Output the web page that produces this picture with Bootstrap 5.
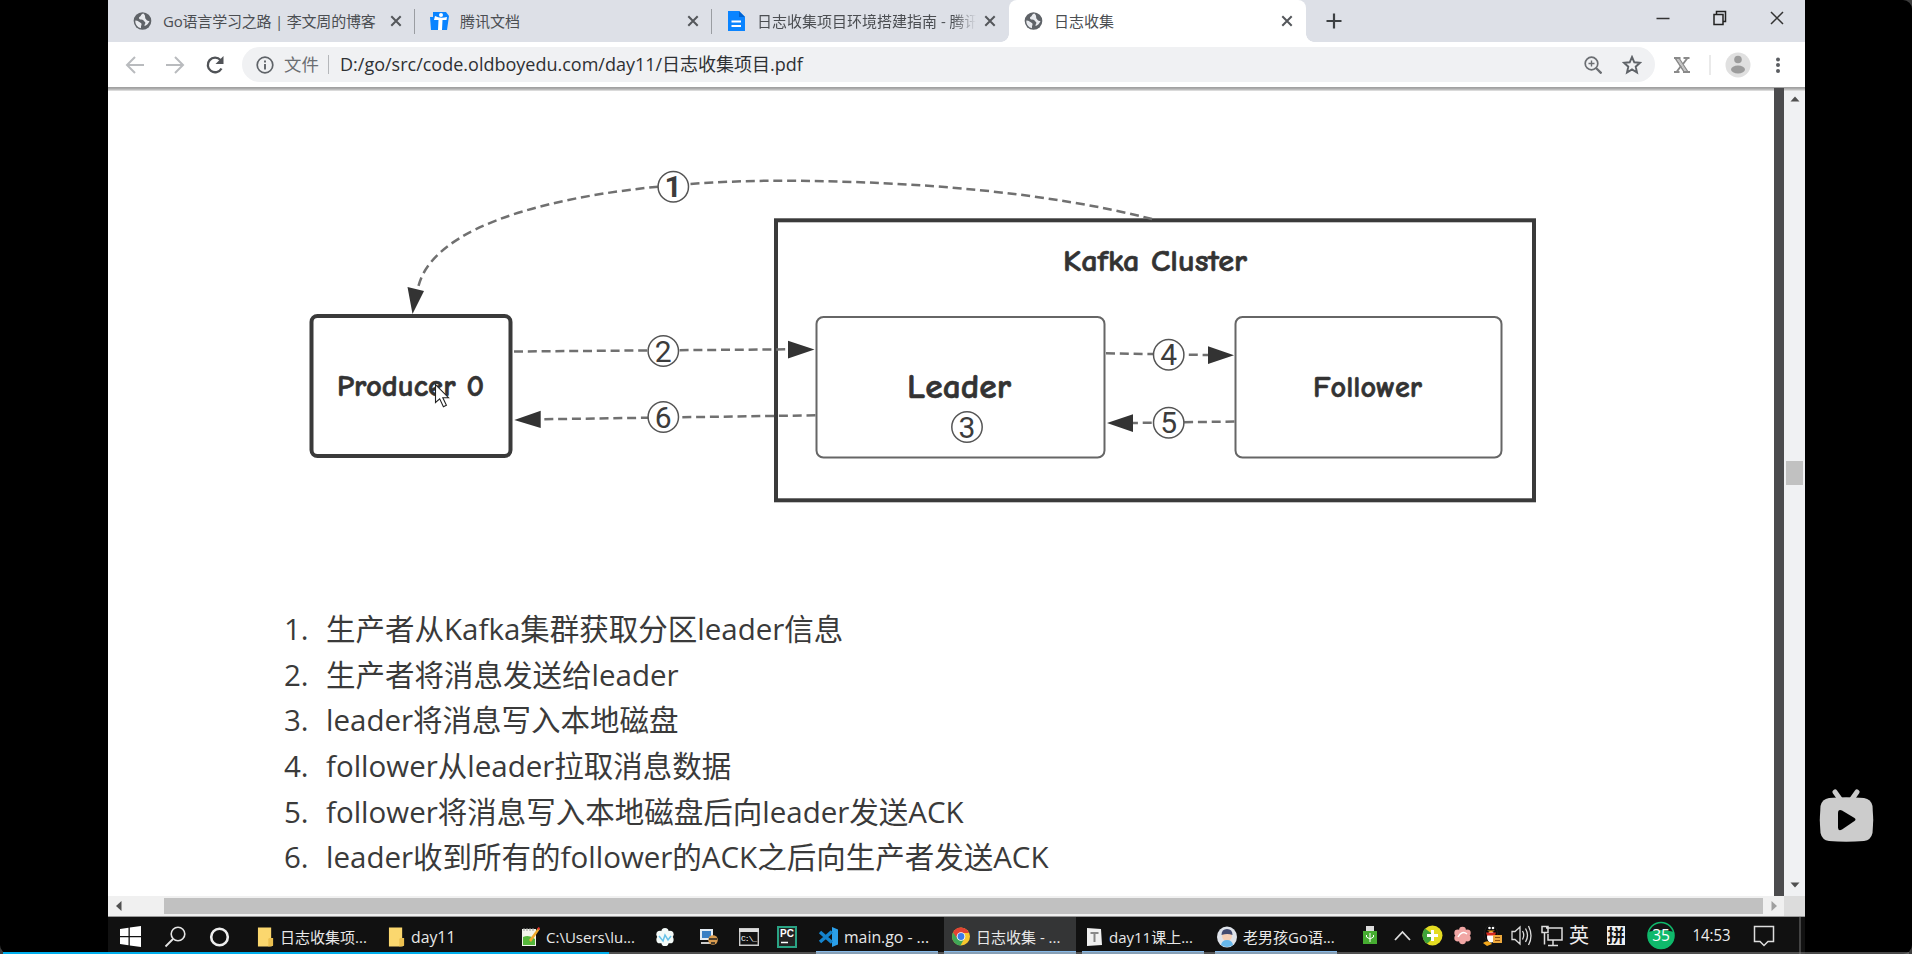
<!DOCTYPE html>
<html lang="zh-CN">
<head>
<meta charset="utf-8">
<title>日志收集</title>
<link href="https://cdn.jsdelivr.net/npm/bootstrap@5.3.0/dist/css/bootstrap.min.css" rel="stylesheet">
<script src="https://cdn.jsdelivr.net/npm/bootstrap@5.3.0/dist/js/bootstrap.bundle.min.js"></script>
<style>
html,body{height:100%;overflow:hidden;background:#3c3c3c}
body{font-family:"Open Sans","Noto Sans CJK SC",sans-serif;color:#333}
svg{display:block;flex:none}
.stage{width:1912px;height:954px;background:#000;border-radius:0 9px 9px 9px}
.side-l{width:108px;flex:none}
.side-r{width:107px;flex:none;padding:789px 0 0 13.5px}
.win{width:1697px;height:954px;flex:none;background:#fff}
.strip{height:42px;background:#dde0e7;flex:none}
.tab{width:297px;height:42px;padding:0 12px 8px 15px;position:relative;font-size:15px;color:#4b4e52;flex:none;line-height:26px}
.tab.first{width:307px;padding-left:25px}
.tab.first .ttl{letter-spacing:-.2px}
.tab svg.fav{margin-right:11px}
.tab .ttl{flex:1 1 0;white-space:nowrap;height:26px;margin-top:8px}
.tab .fade-end{-webkit-mask-image:linear-gradient(90deg,#000 87%,transparent 97%)}
.tab svg{margin-top:7px}
.tab.sep::after{content:"";position:absolute;right:0;top:9px;width:1px;height:25px;background:#9a9da2}
.tab.cur{background:#fff;border-radius:8px 8px 0 0}
.tab.cur::before,.tab.cur::after{content:"";position:absolute;bottom:0;width:8px;height:8px}
.tab.cur::before{left:-8px;background:radial-gradient(circle at 0 0,#dde0e7 7.5px,#fff 8px)}
.tab.cur::after{right:-8px;background:radial-gradient(circle at 100% 0,#dde0e7 7.5px,#fff 8px)}
.plus{margin:11px 0 0 19px}
.ctl{width:57px;height:35px}
.tools{height:45px;flex:none;padding-left:17px}
.nav-ic{width:40px}
.omni{width:1413px;height:35px;border-radius:18px;background:#f0f1f3;margin-left:-3px;padding:0 13px 0 13.5px}
.omni .kind{font-size:17.4px;color:#6b6e72;margin-left:10.5px;width:35px;white-space:nowrap}
.omni .bar{width:1px;height:19px;background:#b5b7ba;margin:0 11px 0 9px}
.omni .url{font-size:18px;color:#2e3033;white-space:nowrap;flex:1 1 0}
.star{margin-left:20px}
.ext{margin-left:18px}
.rule{height:4px;flex:none;background:linear-gradient(#9c9c9c,#b0b0b0 50%,#e8e8e8)}
.view{height:805px;flex:none}
.page{width:1666px;flex:none}
.gutter{width:10px;background:#4b4b4d;flex:none;margin-top:-3px;height:808px}
.vbar{width:21px;background:#f0f1f3;padding:5px 0 8px;flex:none}
.vthumb{width:17px;height:24px;background:#c1c1c1;margin-top:359px}
.steps{list-style:none;margin:-1px 0 0;padding:0 0 0 176px;font-size:29.5px;line-height:45.65px;color:#3a3a3a;white-space:nowrap}
.steps li{display:flex}
.steps .num{width:42px;flex:none}
.hbar{height:21px;flex:none;background:#f0f0f0;border-bottom:1px solid #999}
.hthumb{height:16px;width:1599px;background:#c1c1c1;margin-left:42px}
.corner{width:21px;height:20px;background:#dcdcdc}
.task{height:37px;flex:none;background:#111;color:#e8e8e8;font-size:15px}
.task .it{height:37px;padding-top:2px;flex:none;display:flex;align-items:center;white-space:nowrap;line-height:20px}
.task .it svg{margin-right:6px}
.task .lat{font-size:15.8px}
.task .on{background:#343536}
.run{box-shadow:inset 0 -3px #86b9e8}
.w-start{width:140px;padding-left:12px;gap:20px}
.w-a{width:131px;padding-left:9px}.w-b{width:133px;padding-left:9px}
.w-c{width:131px;padding-left:9px}
.w-p{width:173px;padding-left:12px;gap:17px}
.w-v{width:122px;padding-left:2px;margin-right:6px}.w-g{width:132px;padding-left:7px;margin-right:6px}
.w-t{width:122px;padding-left:3px;margin-right:11px}.w-q{width:122px;padding-left:2px}
.w-start svg,.w-p svg{margin-right:0!important}
.load{position:absolute;left:3px;top:952px;width:606px;height:2px;background:#00aeec}
.rest{position:absolute;left:609px;top:952px;width:1300px;height:2px;background:#8888;}
</style>
</head>
<body>
<svg width="0" height="0" class="position-absolute">
<symbol id="globe" viewBox="0 0 20 20"><circle cx="10" cy="10" r="9.3" fill="#5f6368"/><path d="M11 2.2C8 3 8.500 5.500 6.500 6C5.500 7 7 8.500 8.500 8.500C11 8.500 11 10 12.500 11C14 12 12 13.500 12 15C13 15.500 16.500 13 17.300 10C15.500 10.500 14.500 9.500 13.500 8C12 7 14 5 11 2.200zM2.500 9.500C5 9.500 8 11.500 9 13C9 15 8 16 8.500 17.500C4.500 17 2 13 2.500 9.500z" fill="#e8eaee"/></symbol>
<symbol id="cross" viewBox="0 0 14 14"><path d="M2.300 2.300L11.700 11.700M11.700 2.300L2.300 11.700" stroke="#54575b" stroke-width="2"/></symbol>
<symbol id="folder" viewBox="0 0 18 22"><path d="M1 1h14v11h2v8l-2 1H1z" fill="#fbd76e"/><path d="M12 21V13.500q0-1.500 1.500-1.500H17v8z" fill="#ecc050"/></symbol>
<symbol id="petal" viewBox="0 0 22 22"><g><circle cx="11" cy="5" r="4"/><circle cx="5.500" cy="8" r="4"/><circle cx="16.500" cy="8" r="4"/><circle cx="5.500" cy="14" r="4"/><circle cx="16.500" cy="14" r="4"/><circle cx="11" cy="17" r="4"/><circle cx="11" cy="11" r="6"/></g></symbol>
</svg>
<div class="stage d-flex position-relative">
<div class="side-l"></div>
<main class="win d-flex flex-column">
 <div class="strip d-flex">
  <div class="tab first sep d-flex align-items-start"><svg class="fav" width="19" height="28"><use href="#globe" y="4.500" width="19" height="19"/></svg><div class="ttl">Go语言学习之路 | 李文周的博客</div><svg width="14" height="28"><use href="#cross" y="7" width="14" height="14"/></svg></div>
  <div class="tab sep d-flex align-items-start"><svg class="fav" width="19" height="28" viewBox="0 0 19 28"><path d="M3 5h13l3 4-2 14H1L0 10h3z" fill="#0a84ff"/><path d="M5 9q5 3 12 1l-.5 3h-4L12 23H8l.5-10H4z" fill="#fff"/><circle cx="11" cy="8" r="2" fill="#fff"/></svg><div class="ttl">腾讯文档</div><svg width="14" height="28"><use href="#cross" y="7" width="14" height="14"/></svg></div>
  <div class="tab d-flex align-items-start"><svg class="fav" width="19" height="28" viewBox="0 0 19 28"><path d="M1 4h11l6 6v14H1z" fill="#0a84ff"/><path d="M12 4v6h6z" fill="#0062d0"/><path d="M4.500 14.500h9.500M4.500 19h9.500" stroke="#fff" stroke-width="1.800"/></svg><div class="ttl fade-end">日志收集项目环境搭建指南 - 腾讯</div><svg width="14" height="28"><use href="#cross" y="7" width="14" height="14"/></svg></div>
  <div class="tab cur d-flex align-items-start"><svg class="fav" width="19" height="28"><use href="#globe" y="4.500" width="19" height="19"/></svg><div class="ttl">日志收集</div><svg width="14" height="28"><use href="#cross" y="7" width="14" height="14"/></svg></div>
  <svg class="plus" width="18" height="20" viewBox="0 0 18 20"><path d="M9 2.500v15M1.500 10h15" stroke="#3c4043" stroke-width="2.200"/></svg>
  <div class="ms-auto d-flex">
   <div class="ctl d-flex align-items-center justify-content-center"><svg width="16" height="16"><path d="M1.500 8.500h13" stroke="#333" stroke-width="1.500"/></svg></div>
   <div class="ctl d-flex align-items-center justify-content-center"><svg width="16" height="16"><path d="M2 4.500h9v10H2zM4.500 4V1.500h9v10H11" fill="none" stroke="#222" stroke-width="1.500"/></svg></div>
   <div class="ctl d-flex align-items-center justify-content-center"><svg width="16" height="16"><path d="M2 2l12 12M14 2L2 14" stroke="#333" stroke-width="1.500"/></svg></div>
  </div>
 </div>
 <div class="tools d-flex align-items-center">
  <div class="nav-ic"><svg width="20" height="20"><path d="M19 10H2.500M10 2L2 10l8 8" fill="none" stroke="#b9bbbe" stroke-width="2"/></svg></div>
  <div class="nav-ic"><svg width="20" height="20"><path d="M1 10h16.500M10 2l8 8-8 8" fill="none" stroke="#b9bbbe" stroke-width="2"/></svg></div>
  <div class="nav-ic"><svg width="20" height="20"><path d="M16.500 13.500A7.300 7.300 0 1 1 15.500 5" fill="none" stroke="#505357" stroke-width="2.300"/><path d="M18.500 1v8h-8z" fill="#505357"/></svg></div>
  <div class="omni d-flex align-items-center">
   <svg width="18" height="18"><circle cx="9" cy="9" r="7.800" fill="none" stroke="#5f6368" stroke-width="1.700"/><path d="M9 8v5.500M9 4.500v2" stroke="#5f6368" stroke-width="1.900"/></svg>
   <div class="kind">文件</div><div class="bar"></div>
   <div class="url">D:/go/src/code.oldboyedu.com/day11/日志收集项目.pdf</div>
   <svg width="18" height="18"><circle cx="7.500" cy="7.500" r="6.300" fill="none" stroke="#6b6e72" stroke-width="1.700"/><path d="M12 12l5.500 5.500" stroke="#6b6e72" stroke-width="2.300"/><path d="M4.500 7.500h6M7.500 4.500v6" stroke="#6b6e72" stroke-width="1.400"/></svg>
   <svg width="20" height="20" class="star"><path d="M10 2l2.300 5.300 5.700.5-4.300 3.900 1.300 5.800-5-3.100-5 3.100 1.300-5.800L2 7.800l5.700-.5z" fill="none" stroke="#5f6368" stroke-width="1.900"/></svg>
  </div>
  <svg width="18" height="18" class="ext"><path d="M2.500 2.500L11 15.500M6 2.500L14.500 15.500" stroke="#8a8a8a" stroke-width="1.600"/><path d="M4.500 2.500L13 15.500" stroke="#c4c4c4" stroke-width="2"/><path d="M1 2h6.500M10.500 2h6M14.500 2L10 8M8 10L3.500 16M1 16h5.500M10 16h7" stroke="#8a8a8a" stroke-width="1.900"/></svg>
  <svg width="97" height="30" class="ms-1" viewBox="0 0 97 30"><path d="M15 5v20" stroke="#d5d5d5"/><circle cx="43" cy="15" r="12.500" fill="#e0e0e0"/><circle cx="43" cy="9.500" r="3.800" fill="#9c9c9c"/><ellipse cx="43" cy="19.500" rx="7" ry="4" fill="#9c9c9c"/><g fill="#5a5d61"><circle cx="83" cy="9.500" r="2"/><circle cx="83" cy="15" r="2"/><circle cx="83" cy="21" r="2"/></g></svg>
 </div>
 <div class="rule"></div>
 <div class="view d-flex">
  <div class="page">
   <svg width="1666" height="516" viewBox="108 91 1666 516">
    <g fill="none" stroke="#3a3a3a">
     <rect x="311.500" y="316" width="199" height="140" rx="6" stroke-width="4"/>
     <rect x="776" y="220.300" width="758" height="280" stroke-width="4"/>
     <g stroke="#666" stroke-width="2"><rect x="816.500" y="317" width="288" height="140.500" rx="7"/><rect x="1235.500" y="317" width="266" height="140.500" rx="7"/></g>
     <g stroke="#707070" stroke-width="2.500" stroke-dasharray="9 4.800">
      <path d="M1152 219C1050 193 920 181 780 180.700C620 181 435 210 418 288"/>
      <path d="M514 351.500L790 349.300"/><path d="M815.500 415.300L540 419.300"/><path d="M1106 353.300L1210 355"/><path d="M1234.500 421.500L1133 423"/>
     </g>
    </g>
    <g fill="#333"><path d="M407.500 287L424 291L412.500 314zM788 340.700L814.500 349.500L788 358.500zM540.700 410.700L514.300 420L540.700 428zM1208 346.300L1234 355.300L1208 364zM1133 414.300L1107 423L1133 432z"/></g>
    <g fill="#fff" stroke="#555" stroke-width="1.500"><circle cx="673.300" cy="186.700" r="15.200"/><circle cx="663.300" cy="351" r="15.200"/><circle cx="663.300" cy="417" r="15.200"/><circle cx="967" cy="427" r="15.200"/><circle cx="1168.700" cy="354.700" r="15.200"/><circle cx="1168.700" cy="422.700" r="15.200"/></g>
    <g fill="#3c3c3c" font-family="Roboto,sans-serif" font-size="30" text-anchor="middle"><text x="673" y="197.300" font-weight="bold">1</text><text x="663.300" y="361.700">2</text><text x="663.300" y="427.700">6</text><text x="967" y="437.700">3</text><text x="1168.700" y="365.400">4</text><text x="1168.700" y="433.400">5</text></g>
    <g fill="#333" stroke="#333" stroke-width=".6" font-family="'Comic Sans MS','Comic Neue',Lato,sans-serif" font-weight="bold" font-size="30.500">
     <text x="1063" y="270.500" textLength="184" lengthAdjust="spacingAndGlyphs">Kafka Cluster</text>
     <text x="907" y="398" font-size="34" textLength="104" lengthAdjust="spacingAndGlyphs">Leader</text>
     <text x="1313" y="396.500" textLength="109" lengthAdjust="spacingAndGlyphs">Follower</text>
     <text x="337" y="396" textLength="147" lengthAdjust="spacingAndGlyphs">Producer 0</text>
    </g>
    <path d="M435.500 384.500v18l4.200-3.700 3.700 8 3-1.500-3.600-7.600h5.700z" fill="#fff" stroke="#222" stroke-width="1.100"/>
   </svg>
   <ol class="steps">
    <li><span class="num">1.</span>生产者从Kafka集群获取分区leader信息</li>
    <li><span class="num">2.</span>生产者将消息发送给leader</li>
    <li><span class="num">3.</span>leader将消息写入本地磁盘</li>
    <li><span class="num">4.</span>follower从leader拉取消息数据</li>
    <li><span class="num">5.</span>follower将消息写入本地磁盘后向leader发送ACK</li>
    <li><span class="num">6.</span>leader收到所有的follower的ACK之后向生产者发送ACK</li>
   </ol>
  </div>
  <div class="gutter"></div>
  <div class="vbar d-flex flex-column align-items-center"><svg width="10" height="6"><path d="M5 .5L9.500 5.500h-9z" fill="#505050"/></svg><div class="vthumb"></div><svg class="mt-auto" width="10" height="6"><path d="M5 5.500L9.500.5h-9z" fill="#505050"/></svg></div>
 </div>
 <div class="hbar d-flex align-items-center"><svg class="ms-2" width="6" height="12"><path d="M0 6L5.500 1v10z" fill="#505050"/></svg><div class="hthumb"></div><svg class="ms-2" width="6" height="12"><path d="M6 6L.5 1v10z" fill="#a0a0a0"/></svg><div class="corner ms-auto"></div></div>
 <div class="task d-flex">
  <div class="it w-start">
   <svg width="21" height="21"><path d="M0 3l8.500-1.200v8.200H0zM9.800 1.600L21 0v10H9.800zM0 11.200h8.500v8L0 18zM9.800 11.200H21V21L9.800 19.400z" fill="#fff"/></svg>
   <svg width="26" height="22"><circle cx="17" cy="8" r="6.800" fill="none" stroke="#e5e5e5" stroke-width="1.600"/><path d="M12 13L4.500 20.500" stroke="#e5e5e5" stroke-width="1.800"/></svg>
   <svg width="24" height="22"><circle cx="12.500" cy="11" r="8.300" fill="none" stroke="#eee" stroke-width="2.600"/></svg>
  </div>
  <div class="it w-a"><svg width="17" height="22"><use href="#folder" width="17" height="22"/></svg>日志收集项...</div>
  <div class="it w-b lat"><svg width="17" height="22"><use href="#folder" width="17" height="22"/></svg>day11</div>
  <div class="it w-c"><svg width="19" height="22"><path d="M1 3h14v17H1z" fill="#f2f4ea"/><path d="M2 11q6-3 12 2v6H2z" fill="#55b63a"/><path d="M3 2v3M6 2v3M9 2v3M12 2v3" stroke="#999"/><path d="M8 14L17 2l2 1-9 13z" fill="#f0a92c"/><path d="M16 3l1.500-2L19 2l-1 2z" fill="#d33"/></svg>C:\Users\lu...</div>
  <div class="it w-p">
   <svg width="20" height="22"><use href="#petal" width="20" height="22" fill="#f4faf8"/><path d="M4 10l4 5 2-6 3 5 3-4" fill="none" stroke="#67c2e8" stroke-width="1.500"/></svg>
   <svg width="30" height="22"><path d="M8 3h13v11H8z" fill="#e4edf5"/><path d="M10 5h9v7h-9z" fill="#397fc4"/><path d="M9 16h9v2H9z" fill="#ccc"/><circle cx="21" cy="14" r="4.800" fill="#d99c50"/><path d="M17 13h8M19 17h4" stroke="#222" stroke-width="1.600"/></svg>
   <svg width="20" height="20"><path d="M.7 1.700h18.600v16.600H.700z" fill="#111" stroke="#ccc" stroke-width="1.400"/><path d="M0 2h20v3H0z" fill="#ddd"/><text x="2" y="14" font-size="8" fill="#fff" font-family="Liberation Mono,monospace" textLength="16">C:\_</text></svg>
   <svg width="22" height="22"><path d="M2 1h18v20H2z" fill="#222" stroke="#2aa384" stroke-width="2"/><text x="4" y="11" font-size="10" font-weight="bold" fill="#fff" font-family="Liberation Sans,sans-serif">PC</text><path d="M5 16.500h7" stroke="#fff" stroke-width="1.500"/></svg>
  </div>
  <div class="it w-v run lat"><svg width="20" height="20"><path d="M14 0l6 2.500v15L14 20z" fill="#2ba0ea"/><path d="M14 4.500L2 15M14 15.500L2 5" stroke="#1583cc" stroke-width="3.500"/></svg>main.go - ...</div>
  <div class="it w-g run on"><svg width="19" height="19"><circle cx="10" cy="9.500" r="9" fill="#f6c62e"/><path d="M10 .5A9 9 0 0 0 2 5.500L6 13l4-3.500V6h8A9 9 0 0 0 10 .500z" fill="#e24334"/><path d="M2 5.500a9 9 0 0 0 7.500 13L13 12l-7-1z" fill="#3fa757"/><circle cx="10" cy="9.500" r="4.300" fill="#fff"/><circle cx="10" cy="9.500" r="3.400" fill="#3c7bea"/></svg>日志收集 - ...</div>
  <div class="it w-t run"><svg width="18" height="20"><path d="M2 1l14 1 1 16-15 1z" fill="#f0f0f0"/><path d="M5.500 6h8M9.500 6v9" stroke="#888" stroke-width="2"/></svg>day11课上...</div>
  <div class="it w-q run"><svg width="20" height="22"><ellipse cx="10" cy="11" rx="10" ry="10.500" fill="#dfe3ea"/><circle cx="10" cy="10" r="5" fill="#f5cfb6"/><path d="M4.500 9q0-6 5.500-6t5.500 6q-5-2-11 0z" fill="#434b70"/><path d="M4 19q1-5 6-5t6 5q-6 4-12 0z" fill="#67b8ec"/></svg>老男孩Go语...</div>
  <svg width="468" height="37" viewBox="1337 0 468 37">
   <path d="M1366 9h8v5h-8z" fill="#ddd"/><path d="M1363 14h14v13h-14z" fill="#46ac31"/><path d="M1370 16v9M1366.500 18v2l3.500 2 3.500-2v-2" stroke="#fff" fill="none"/>
   <path d="M1395 23l7.500-8 7.500 8" fill="none" stroke="#ddd" stroke-width="1.800"/>
   <circle cx="1432.500" cy="18.500" r="10" fill="#e5dc22"/><path d="M1425 11.500a10 10 0 0 0 2 15q5-3 6-9z" fill="#3fa33a"/><path d="M1432.500 13v11M1427 18.500h11" stroke="#fff" stroke-width="3"/>
   <use href="#petal" x="1453" y="8" width="19" height="21" fill="#f1a6a4"/><path d="M1458 20q4-7 9-3" stroke="#fff" fill="none" stroke-width="1.500"/>
   <ellipse cx="1491" cy="17" rx="6.500" ry="9" fill="#090909" stroke="#333" stroke-width=".5"/><ellipse cx="1491" cy="20" rx="4" ry="5.500" fill="#fff"/><circle cx="1489.500" cy="11" r="1.300" fill="#fff"/><circle cx="1493" cy="11" r="1.300" fill="#fff"/><path d="M1486 15.500h10l-1 3h-8z" fill="#d8291e"/><path d="M1487 13.500h8l-4 2z" fill="#f3a81c"/><path d="M1493 18h9v8h-9z" fill="#eda83c"/><path d="M1483 26q5-4 9 1l-5 2z" fill="#f3a81c"/><path d="M1495 20.500h5M1495 23.500h5" stroke="#8b4d10"/>
   <path d="M1512 14.500h3l5-4.500v17l-5-4.500h-3zM1522.500 14q2.500 4 0 8.500M1525.500 11.500q4 7 0 13.500M1528.500 9q5 10 0 19" fill="none" stroke="#ddd" stroke-width="1.300"/>
   <path d="M1546 11h16v12h-14v-6M1553 23v5M1548 28.500h10M1542 9.500h6v6h-6zM1544.500 15.500v12" fill="none" stroke="#ddd" stroke-width="1.500"/>
   <text x="1569" y="25.500" font-size="20" fill="#eee">英</text>
   <path d="M1607 9h18v19h-18z" fill="#eee"/><text x="1607.500" y="24.500" font-size="17" font-weight="bold" fill="#111">拼</text>
   <circle cx="1661" cy="18.500" r="13" fill="#161616" stroke="#0fb96b" stroke-width="1.600"/><path d="M1648 15q13-4 26 0v4a13 13 0 0 1-26 0z" fill="#0fb96b"/><text x="1661" y="24" font-size="15.500" text-anchor="middle" fill="#fff">35</text>
   <text x="1692.500" y="23.500" font-size="15.500" fill="#eee" textLength="38" lengthAdjust="spacingAndGlyphs">14:53</text>
   <path d="M1754.500 9.500h19v15h-5.500l-4 4-4-4h-5.500z" fill="none" stroke="#ddd" stroke-width="1.500"/><path d="M1800 0v37" stroke="#777"/>
  </svg>
 </div>
</main>
<div class="side-r"><svg width="55" height="54"><path d="M16 3l5 7M38 3l-5 7" stroke="#ccc" stroke-width="5" stroke-linecap="round"/><path d="M10 9Q27 7.500 45 9Q52 10 53.500 17Q55 31 53.500 44Q52 51 45 52Q27 53.500 10 52Q3 51 1.500 44Q0 31 1.500 17Q3 10 10 9z" fill="#ccc"/><path d="M19 24q0-4 4-2.500l12.500 7.500q2 1.500 0 3L23 40.500q-4 2-4-2z" fill="#000"/></svg></div>
<div class="rest"></div><div class="load"></div>
</div>
</body>
</html>
